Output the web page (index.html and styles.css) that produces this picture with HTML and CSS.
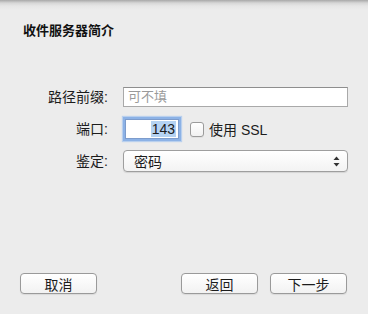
FILE: index.html
```html
<!DOCTYPE html>
<html lang="zh-CN">

<head>
    <meta charset="UTF-8">
    <title>收件服务器简介</title>
    <link rel="stylesheet" href="styles.css">
</head>

<body>
    <div class="dialog">
        <h1 class="title">收件服务器简介</h1>

        <div class="form">
            <label class="label">路径前缀:</label>
            <div class="field">
                <div class="text-input"><span class="placeholder">可不填</span></div>
            </div>

            <label class="label">端口:</label>
            <div class="field port-row">
                <div class="text-input port"><span class="selected">143</span></div>
                <span class="checkbox"></span>
                <span class="check-label">使用 SSL</span>
            </div>

            <label class="label">鉴定:</label>
            <div class="field">
                <div class="select">
                    <span>密码</span>
                    <svg class="arrows" width="7" height="11" viewBox="0 0 7 11">
                        <path d="M3.5 0.5 L6.5 4 L0.5 4 Z" fill="#333"/>
                        <path d="M3.5 10.5 L6.5 7 L0.5 7 Z" fill="#333"/>
                    </svg>
                </div>
            </div>
        </div>

        <div class="footer">
            <button class="btn">取消</button>
            <div class="right-btns">
                <button class="btn">返回</button>
                <button class="btn">下一步</button>
            </div>
        </div>
    </div>
</body>

</html>
```

FILE: styles.css
```css
* {
    margin: 0;
    padding: 0;
    box-sizing: border-box;
}

body {
    width: 368px;
    height: 314px;
    background: #ececec;
    font-family: "Liberation Sans", "Noto Sans CJK SC", sans-serif;
    font-size: 13px;
    color: #1c1c1c;
    overflow: hidden;
}

.dialog {
    height: 314px;
    display: flex;
    flex-direction: column;
    /* 顶部的阴影 */
    background: linear-gradient(#a8a8a8, #d6d6d6 3px, #e6e6e6 6px, #ececec 10px);
}

.title {
    font-size: 13px;
    font-weight: bold;
    line-height: 16px;
    padding: 23px 0 0 23px;
    color: #111;
}

.form {
    display: grid;
    grid-template-columns: 87px 225px;
    grid-auto-rows: 32px;
    column-gap: 13px;
    align-items: center;
    margin: 42px 0 0 23px;
}

.label {
    text-align: right;
    line-height: 16px;
    font-size: 14px;
    padding-right: 2px;
}

.field {
    display: flex;
    align-items: center;
}

.text-input {
    width: 225px;
    height: 20px;
    background: #fff;
    border: 1px solid #a9a9a9;
    border-top-color: #8e8e8e;
    line-height: 18px;
    padding: 0 4px;
}

.placeholder {
    color: #9a9a9a;
}

.port-row {
    padding-left: 2px;
}

.text-input.port {
    width: 54px;
    text-align: right;
    padding: 0 2px;
    border-color: #7d9ccc;
    box-shadow: 0 0 0 2px #8cb2e6, 0 0 1px 3px #b9d0ee;
}

.selected {
    background: #b5d3f3;
    padding: 0 1px;
    font-size: 14px;
}

.checkbox {
    width: 14px;
    height: 15px;
    margin-left: 11px;
    border: 1px solid #9b9b9b;
    border-radius: 3px;
    background: linear-gradient(#fff, #f1f1f1);
    box-shadow: 0 1px 0 rgba(0, 0, 0, 0.05);
}

.check-label {
    margin-left: 5px;
    font-size: 14px;
}

.select {
    width: 225px;
    height: 22px;
    display: flex;
    align-items: center;
    justify-content: space-between;
    padding: 0 7px 0 10px;
    border: 1px solid #9e9e9e;
    border-radius: 4px;
    background: linear-gradient(#fff, #f3f3f3);
    box-shadow: 0 1px 1px rgba(0, 0, 0, 0.1);
    font-size: 14px;
}

.footer {
    margin-top: auto;
    display: flex;
    justify-content: space-between;
    padding: 0 21px 20px 20px;
}

.right-btns {
    display: flex;
    gap: 12px;
}

.btn {
    width: 77px;
    height: 21px;
    font-family: inherit;
    font-size: 14px;
    color: #1c1c1c;
    border: 1px solid #9a9a9a;
    border-radius: 4px;
    background: linear-gradient(#fff, #f2f2f2);
    box-shadow: 0 1px 1px rgba(0, 0, 0, 0.08);
}
```
